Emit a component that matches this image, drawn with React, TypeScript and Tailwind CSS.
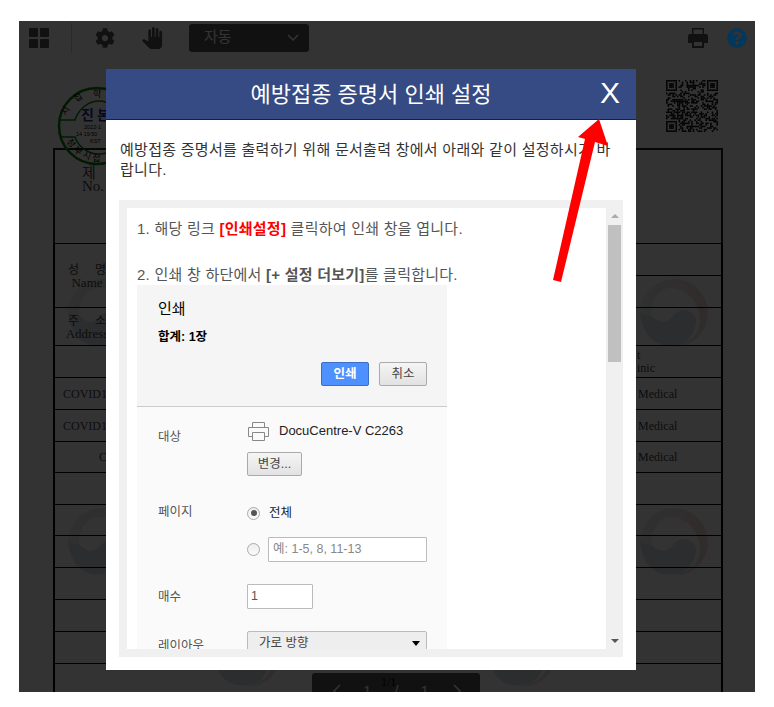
import { FaCog, FaQuestionCircle } from "react-icons/fa";
import { MdPanTool } from "react-icons/md";

const KR = "font-['Liberation_Sans','Noto_Sans_CJK_KR',sans-serif]";

const QR_SIZE = 33;

function isQrDark(x: number, y: number) {
  const inFinder = (fx: number, fy: number) => {
    const dx = x - fx;
    const dy = y - fy;
    if (dx < -1 || dy < -1 || dx > 7 || dy > 7) return null;
    if (dx < 0 || dy < 0 || dx > 6 || dy > 6) return false;
    if (dx === 0 || dy === 0 || dx === 6 || dy === 6) return true;
    return dx >= 2 && dx <= 4 && dy >= 2 && dy <= 4;
  };
  const finder =
    inFinder(0, 0) ?? inFinder(QR_SIZE - 7, 0) ?? inFinder(0, QR_SIZE - 7);
  if (finder !== null) return finder;
  const hash = Math.sin(x * 12.9898 + y * 78.233) * 43758.5453;
  return hash - Math.floor(hash) < 0.5;
}

function QrCode() {
  const cells: { x: number; y: number }[] = [];
  for (let y = 0; y < QR_SIZE; y++) {
    for (let x = 0; x < QR_SIZE; x++) {
      if (isQrDark(x, y)) cells.push({ x, y });
    }
  }
  return (
    <svg width="52" height="52" viewBox="0 0 33 33">
      {cells.map((c) => (
        <rect key={`${c.x}-${c.y}`} x={c.x} y={c.y} width="1" height="1" fill="#000" />
      ))}
    </svg>
  );
}

function Stamp() {
  return (
    <svg width="80" height="80" viewBox="0 0 80 80" className="absolute left-[38px] top-[65px]">
      <circle cx="40" cy="40" r="38" fill="none" stroke="#0a800a" strokeWidth="2.5" />
      <path d="M3 34 H18 C22 22 32 15 42 15 C52 15 60 22 64 34 H77" fill="none" stroke="#0a800a" strokeWidth="1.5" />
      <path d="M3 51 H18 C22 62 32 68 42 68 C52 68 60 62 64 51 H77" fill="none" stroke="#0a800a" strokeWidth="1.5" />
      <g fontFamily="'Noto Sans CJK KR', sans-serif" fontSize="9" fill="#000">
        <text x="9" y="30" transform="rotate(-60 9 30)">시</text>
        <text x="19" y="16" transform="rotate(-32 19 16)">접</text>
        <text x="36" y="11">학</text>
        <text x="9" y="56" transform="rotate(50 9 56)">정</text>
        <text x="16" y="65" transform="rotate(35 16 65)">부</text>
        <text x="25" y="71" transform="rotate(20 25 71)">시</text>
        <text x="35" y="75" transform="rotate(5 35 75)">접</text>
      </g>
      <text x="24" y="34" fontFamily="'Noto Sans CJK KR', sans-serif" fontSize="14" fontWeight="700" fill="#1c2f9c">
        진 본
      </text>
      <g fontFamily="'Liberation Sans', sans-serif" fontSize="5.5" fill="#000">
        <text x="27" y="43">2022-1</text>
        <text x="19" y="50">14 19:50</text>
        <text x="33" y="57">KST</text>
      </g>
    </svg>
  );
}

function Watermark({ className, id }: { className: string; id: string }) {
  return (
    <svg width="70" height="70" viewBox="0 0 70 70" className={`absolute ${className}`}>
      <defs>
        <linearGradient id={id} x1="0" x2="1" y1="0" y2="0">
          <stop offset="0" stopColor="#eceef1" />
          <stop offset="0.5" stopColor="#f1e9e9" />
          <stop offset="1" stopColor="#f6d8d8" />
        </linearGradient>
      </defs>
      <path
        d="M1 35 A34 34 0 1 1 36 69 L44 65 C54 62 60 54 61 44 C62 24 46 10 32 10 C20 10 12 22 12 37 C8 37 3 36 1 35 Z"
        fill={`url(#${id})`}
      />
      <path
        d="M1 35 C3 36 8 37 12 37 C16 42 22 45 27 43 C34 41 36 32 44 32 C52 32 58 38 57 45 C56 54 50 62 44 65 C38 68 30 68 24 67 C14 64 8 58 6 52 C3 46 1 41 1 35 Z"
        fill="#dde1e8"
      />
    </svg>
  );
}

function Label({ ko, en }: { ko: [string, string]; en: string }) {
  return (
    <div className="ml-[13px] w-[38px] text-[13px] leading-[14px]">
      <div className="flex justify-between font-['Noto_Sans_CJK_KR',serif] text-[12px]">
        <span>{ko[0]}</span>
        <span>{ko[1]}</span>
      </div>
      <div className="flex justify-center whitespace-nowrap">{en}</div>
    </div>
  );
}

const TABLE_ROWS: {
  h: string;
  left?: React.ReactNode;
  right?: React.ReactNode;
  span?: number;
  skipLeft?: boolean;
}[] = [
  { h: "h-[32px]", span: 2, left: <Label ko={["성", "명"]} en="Name" /> },
  { h: "h-[32px]", skipLeft: true },
  { h: "h-[38px]", left: <Label ko={["주", "소"]} en="Address" /> },
  { h: "h-[32px]", right: <div className="pl-[1px] leading-[13px]">t<br />inic</div> },
  { h: "h-[32px]", left: <div className="pl-[8px]">COVID19</div>, right: <div className="pl-[2px]">Medical</div> },
  { h: "h-[32px]", left: <div className="pl-[8px]">COVID19</div>, right: <div className="pl-[2px]">Medical</div> },
  { h: "h-[31px]", left: <div className="pl-[44px]">COVID19</div>, right: <div className="pl-[2px]">Medical</div> },
  { h: "h-[32px]" },
  { h: "h-[31px]" },
  { h: "h-[32px]" },
  { h: "h-[32px]" },
  { h: "h-[32px]" },
  { h: "h-[32px]" },
];

function CertificateTable() {
  return (
    <div className="relative ml-[34px] w-[670px] font-['Liberation_Serif',serif] text-[12px] text-[#444]">
      <div className="h-[95px] border-x-2 border-t-2 border-[#222] pl-[27px] pt-[14px] text-[15px] leading-[15px]">
        <div className="font-['Noto_Sans_CJK_KR',serif]">제</div>
        <div>No.</div>
      </div>
      <table className="w-full table-fixed border-collapse border-x-2 border-black">
        <colgroup>
          <col className="w-[582px]" />
          <col />
        </colgroup>
        <tbody>
          {TABLE_ROWS.map((row, i) => (
            <tr key={i} className={row.h}>
              {!row.skipLeft && (
                <td rowSpan={row.span} className="border-y border-black p-0 align-middle">
                  {row.left}
                </td>
              )}
              <td className="border-y border-black p-0 align-middle">{row.right}</td>
            </tr>
          ))}
        </tbody>
      </table>
      <div className="h-[40px] border-x-2 border-black" />
    </div>
  );
}

function Toolbar() {
  return (
    <div className="flex h-[33px] items-center pl-[10px] pr-[8px]">
      <div className="grid w-[20px] grid-cols-2 gap-[2px]">
        <span className="h-[9px] rounded-[1px] bg-[#555]" />
        <span className="h-[9px] rounded-[1px] bg-[#555]" />
        <span className="h-[9px] rounded-[1px] bg-[#555]" />
        <span className="h-[9px] rounded-[1px] bg-[#555]" />
      </div>
      <div className="ml-[22px] h-[30px] w-px bg-[#ccc]" />
      <FaCog className="ml-[23px] text-[#555]" size={20} />
      <MdPanTool className="ml-[26px] text-[#555]" size={22} />
      <div
        className={`ml-[26px] flex h-[28px] w-[120px] items-center justify-between rounded-[3px] bg-[#555] pl-[15px] pr-[10px] text-[15px] text-white ${KR}`}
      >
        <span>자동</span>
        <svg width="12" height="7" viewBox="0 0 12 7" fill="none" stroke="#fff" strokeWidth="1.5">
          <path d="M1 1 L6 6 L11 1" />
        </svg>
      </div>
      <div className="ml-auto flex items-center gap-[19px]">
        <svg width="20" height="20" viewBox="0 0 20 20" fill="#555">
          <path fillRule="evenodd" d="M4 0 H16 V6 H14.5 V1.5 H5.5 V6 H4 Z" />
          <path d="M2 6 H18 A2 2 0 0 1 20 8 V15 H16 V12 H4 V15 H0 V8 A2 2 0 0 1 2 6 Z" />
          <path fillRule="evenodd" d="M4 12 H16 V20 H4 Z M6 14 V18 H14 V14 Z" />
        </svg>
        <FaQuestionCircle className="relative z-10 text-[#04375c]" size={20} />
      </div>
    </div>
  );
}

function Pager() {
  return (
    <div className="absolute bottom-0 left-[293px] h-[19px] w-[168px] overflow-hidden rounded-t-[3px] bg-[#555]">
      <div className="flex items-center pl-[20px] pt-[9px] font-['Liberation_Sans',sans-serif] text-[15px] leading-[18px] text-white">
        <svg width="9" height="14" viewBox="0 0 9 14" fill="none" stroke="#fff" strokeWidth="1.5">
          <path d="M8 1 L2 7 L8 13" />
        </svg>
        <span className="ml-[22px]">1</span>
        <span className="ml-[23px]">/</span>
        <span className="ml-[22px]">1</span>
        <svg width="9" height="14" viewBox="0 0 9 14" fill="none" stroke="#fff" strokeWidth="1.5" className="ml-[24px]">
          <path d="M1 1 L7 7 L1 13" />
        </svg>
      </div>
      <span className="absolute left-[69px] top-0 font-['Liberation_Serif',serif] text-[12px] leading-[18px] text-black">
        1/1
      </span>
    </div>
  );
}

function GrayButton({ children, className }: { children: React.ReactNode; className: string }) {
  return (
    <button
      type="button"
      className={`h-[24px] rounded-[2px] border border-[#aaa] bg-gradient-to-b from-[#f5f5f5] to-[#e2e2e2] text-[12.5px] text-[#444] ${className}`}
    >
      {children}
    </button>
  );
}

function Radio({ checked }: { checked?: boolean }) {
  return (
    <span className="flex h-[13px] w-[13px] items-center justify-center rounded-full border border-[#aaa] bg-gradient-to-b from-[#eee] to-[#fafafa]">
      {checked && <span className="h-[6px] w-[6px] rounded-full bg-[#555]" />}
    </span>
  );
}

function PrintPreview() {
  return (
    <div className="ml-[10px] w-[310px] text-black">
      <div className="h-[122px] border-b border-[#ccc] bg-[#f5f5f5] pl-[21px] pr-[20px]">
        <div className="pt-[13px] text-[15px] leading-[22px]">인쇄</div>
        <div className="mt-[9px] text-[12.5px] font-bold leading-[16px]">합계: 1장</div>
        <div className="mt-[17px] flex justify-end gap-[10px]">
          <button
            type="button"
            className="h-[24px] w-[48px] rounded-[2px] border border-[#3a6fc4] bg-[#4d90fe] text-[12.5px] font-bold text-white"
          >
            인쇄
          </button>
          <GrayButton className="w-[48px]">취소</GrayButton>
        </div>
      </div>
      <div className="h-[260px] bg-[#fafafa] pl-[21px] pr-[20px] text-[12.5px]">
        <div className="flex">
          <div className="w-[89px] pt-[22px] leading-[16px] text-[#555]">대상</div>
          <div className="pt-[13px]">
            <div className="flex h-[22px] items-center">
              <svg width="23" height="21" viewBox="0 0 23 21" fill="none" stroke="#888" strokeWidth="1">
                <path d="M5.5 6.5 V1.5 H17.5 V6.5" />
                <path d="M5.5 15.5 H1.5 V6.5 H21.5 V15.5 H17.5" />
                <path d="M5.5 11.5 H17.5 V19.5 H5.5 Z" />
              </svg>
              <span className="ml-[9px] whitespace-nowrap text-[13px] text-[#222]">DocuCentre-V C2263</span>
            </div>
            <GrayButton className="mt-[10px] w-[55px]">변경...</GrayButton>
          </div>
        </div>
        <div className="mt-[28px] flex">
          <div className="w-[89px] leading-[16px] text-[#555]">페이지</div>
          <div className="flex flex-col">
            <div className="flex h-[16px] items-center gap-[9px] pt-[2px]">
              <Radio checked />
              <span className="text-[#222]">전체</span>
            </div>
            <div className="mt-[17px] flex items-center gap-[8px]">
              <Radio />
              <div className="flex h-[25px] w-[159px] items-center rounded-[1px] border border-[#bbb] bg-white pl-[4px] text-[#888]">
                예: 1-5, 8, 11-13
              </div>
            </div>
          </div>
        </div>
        <div className="mt-[22px] flex items-center">
          <div className="w-[89px] leading-[16px] text-[#555]">매수</div>
          <div className="flex h-[25px] w-[66px] items-center rounded-[1px] border border-[#bbb] bg-white pl-[3px] text-[#555]">
            1
          </div>
        </div>
        <div className="mt-[22px] flex">
          <div className="w-[89px] pt-[7px] leading-[16px] text-[#555]">레이아웃</div>
          <div className="flex h-[25px] w-[180px] items-center justify-between rounded-[2px] border border-[#bbb] bg-[#eee] pl-[11px] pr-[6px] text-[#444]">
            <span>가로 방향</span>
            <span className="h-0 w-0 border-x-[4px] border-t-[5px] border-x-transparent border-t-black" />
          </div>
        </div>
      </div>
    </div>
  );
}

function Modal() {
  return (
    <div className={`absolute left-[87px] top-[48px] h-[601px] w-[530px] bg-white ${KR}`}>
      <div className="relative flex h-[51px] items-center justify-center border-b border-[#222] bg-[#364b83] text-[22px] text-white">
        <span>예방접종 증명서 인쇄 설정</span>
        <span className="absolute right-[16px] top-[5px] font-['Liberation_Sans',sans-serif] text-[30px] leading-[38px]">
          X
        </span>
      </div>
      <p className="pl-[14px] pr-[20px] pt-[20px] text-[15px] leading-[20px] tracking-[0.28px] text-[#333]">
        예방접종 증명서를 출력하기 위해 문서출력 창에서 아래와 같이 설정하시기 바랍니다.
      </p>
      <div className="mx-[13px] mt-[20px] flex h-[457px] bg-[#f0f0f0] p-[8px] pr-[2px]">
        <div className="h-[441px] flex-1 overflow-hidden bg-white">
          <div className="pl-[10px] pt-[11px] text-[15px] leading-[20px] tracking-[0.25px] text-[#555]">
            <p>
              1. 해당 링크 <b className="text-[#f00]">[인쇄설정]</b> 클릭하여 인쇄 창을 엽니다.
            </p>
            <p className="mt-[26px]">
              2. 인쇄 창 하단에서 <b>[+ 설정 더보기]</b>를 클릭합니다.
            </p>
          </div>
          <PrintPreview />
        </div>
        <div className="ml-[2px] flex h-[441px] w-[13px] flex-col items-center">
          <span className="mt-[6px] h-0 w-0 border-x-[4px] border-b-[4px] border-x-transparent border-b-[#aaa]" />
          <span className="mt-[7px] h-[137px] w-full bg-[#c0c0c0]" />
          <span className="mb-[6px] mt-auto h-0 w-0 border-x-[4px] border-t-[4px] border-x-transparent border-t-[#555]" />
        </div>
      </div>
    </div>
  );
}

export default function App() {
  return (
    <div className="h-[707px] w-[774px] bg-white pl-[19px] pt-[21px]">
      <div className="relative h-[671px] w-[736px] overflow-hidden bg-white">
        <Watermark id="wm1" className="left-[48px] top-[257px]" />
        <Watermark id="wm2" className="left-[620px] top-[257px]" />
        <Watermark id="wm3" className="left-[48px] top-[486px]" />
        <Watermark id="wm4" className="left-[620px] top-[486px]" />
        <Watermark id="wm5" className="left-[193px] top-[597px]" />
        <Watermark id="wm6" className="left-[468px] top-[597px]" />
        <Toolbar />
        <div className="pt-[94px]">
          <CertificateTable />
        </div>
        <Stamp />
        <div className="absolute left-[647px] top-[59px]">
          <QrCode />
        </div>
        <Pager />
        <div className="absolute inset-0 bg-black/80" />
        <Modal />
        <svg width="736" height="671" viewBox="0 0 736 671" className="pointer-events-none absolute left-0 top-0">
          <polygon points="580,98 589,125 576,121 542,261 534,259 566,118 559,116" fill="#f00" />
        </svg>
      </div>
    </div>
  );
}
